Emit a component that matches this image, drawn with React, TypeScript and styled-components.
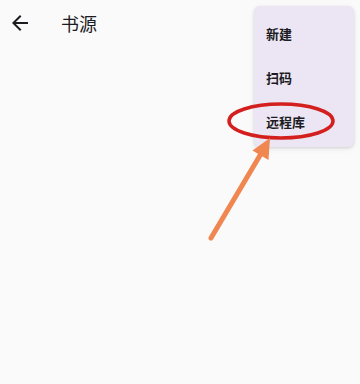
import styled, { createGlobalStyle } from "styled-components";

const GlobalStyle = createGlobalStyle`
  html, body {
    margin: 0;
    padding: 0;
    background: #fafafa;
  }
  body {
    font-family: "Noto Sans CJK SC", "Noto Sans", sans-serif;
  }
`;

const Screen = styled.div`
  position: relative;
  width: 360px;
  height: 384px;
  background: #fafafa;
  overflow: hidden;
`;

const Toolbar = styled.div`
  display: flex;
  align-items: center;
  height: 46px;
  padding: 0 0 0 8px;
`;

const IconButton = styled.div`
  display: flex;
  align-items: center;
  justify-content: center;
  width: 24px;
  height: 24px;
  color: #1c1b1f;
`;

const Title = styled.h1`
  margin: 0 0 0 29px;
  font-size: 18px;
  font-weight: 400;
  color: #1c1b1f;
  line-height: 1;
`;

const Menu = styled.ul`
  position: absolute;
  top: 6px;
  left: 254px;
  width: 100px;
  margin: 0;
  padding: 5px 0 4px;
  list-style: none;
  background: #ece6f4;
  border-radius: 6px;
  box-shadow: 0 1px 3px rgba(0, 0, 0, 0.12), 0 2px 6px rgba(0, 0, 0, 0.06);
`;

const MenuItem = styled.li`
  display: flex;
  align-items: center;
  height: 44px;
  padding: 0 12px;
  font-size: 13px;
  font-weight: 700;
  color: #1c1b1f;
`;

const Annotation = styled.svg`
  position: absolute;
  inset: 0;
  pointer-events: none;
`;

export default function App() {
  return (
    <>
      <GlobalStyle />
      <Screen>
        <Toolbar>
          <IconButton>
            <svg width="24" height="24" viewBox="0 0 24 24">
              <path
                fill="currentColor"
                d="M20 11H7.83l5.59-5.59L12 4l-8 8 8 8 1.41-1.41L7.83 13H20v-2z"
              />
            </svg>
          </IconButton>
          <Title>书源</Title>
        </Toolbar>
        <Menu>
          <MenuItem>新建</MenuItem>
          <MenuItem>扫码</MenuItem>
          <MenuItem>远程库</MenuItem>
        </Menu>
        <Annotation width="360" height="384" viewBox="0 0 360 384">
          <ellipse
            cx="281"
            cy="121"
            rx="52"
            ry="17"
            fill="none"
            stroke="#d41f1f"
            strokeWidth="3.5"
          />
          <line
            x1="211"
            y1="238"
            x2="262"
            y2="152"
            stroke="#f08650"
            strokeWidth="5"
            strokeLinecap="round"
          />
          <polygon points="270,138 252.5,150.5 268.5,160" fill="#f08650" />
        </Annotation>
      </Screen>
    </>
  );
}
